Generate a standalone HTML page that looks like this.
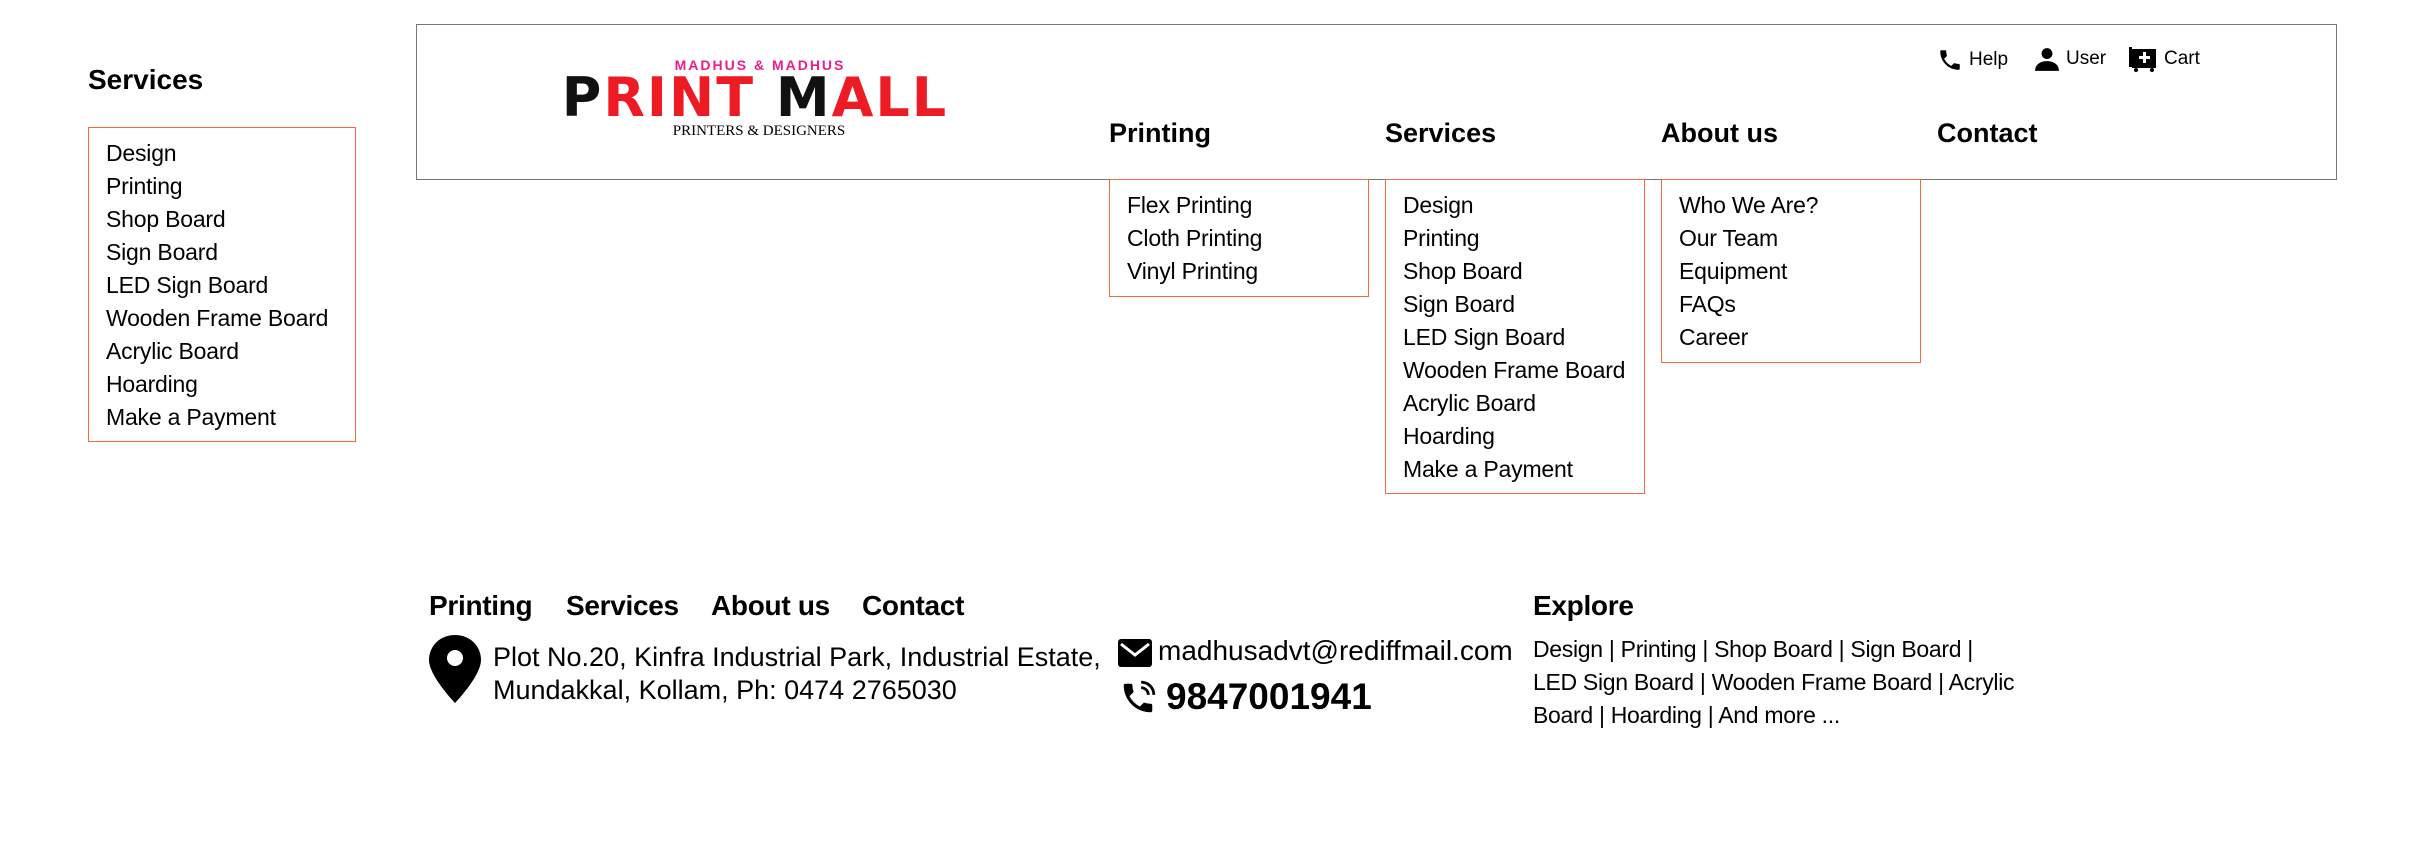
<!DOCTYPE html>
<html><head><meta charset="utf-8"><style>
*{margin:0;padding:0;box-sizing:border-box}
body{width:2418px;height:853px;background:#fff;position:relative;font-family:"Liberation Sans",Arial,sans-serif;color:#000;overflow:hidden}
.abs{position:absolute}
.box{position:absolute;border:1.5px solid #f26a3d;padding-top:9px;padding-left:17px}
.box div{font-size:23px;line-height:33px;white-space:nowrap;letter-spacing:-0.2px}
.nav{position:absolute;top:116px;font-size:27px;font-weight:bold;line-height:34px}
.top{position:absolute;top:46px;font-size:19px;line-height:24px;display:flex;align-items:center;gap:6px}
.fn{position:absolute;top:589px;font-size:28px;font-weight:bold;line-height:34px;letter-spacing:-0.3px}
</style></head><body>

<div class="abs" style="left:88px;top:63px;font-size:28px;font-weight:bold;line-height:34px">Services</div>
<div class="box" style="left:88px;top:127px;width:268px;height:315px">
<div>Design</div><div>Printing</div><div>Shop Board</div><div>Sign Board</div><div>LED Sign Board</div><div>Wooden Frame Board</div><div>Acrylic Board</div><div>Hoarding</div><div>Make a Payment</div>
</div>

<div class="abs" style="left:416px;top:24px;width:1921px;height:156px;border:1.5px solid #777"></div>

<!-- logo -->
<div class="abs" style="left:520px;top:56px;width:470px;height:90px;text-align:center;white-space:nowrap">
<div style="font-size:14px;color:#ec1c8c;font-weight:bold;letter-spacing:2px;line-height:18px;padding-left:10px">MADHUS &amp; MADHUS</div>
<div style="font-size:54px;font-weight:bold;line-height:48px;letter-spacing:2px;color:#ed1c24;font-family:'DejaVu Sans','Liberation Sans',sans-serif"><span style="color:#111">P</span>RINT <span style="color:#111">M</span>ALL</div>
<div style="font-family:'Liberation Serif',serif;font-size:15px;line-height:18px;padding-left:8px">PRINTERS &amp; DESIGNERS</div>
</div>

<div class="top" style="left:1937px"><svg width="26" height="28" viewBox="0 0 24 24"><path d="M6.6 10.8c1.4 2.8 3.8 5.1 6.6 6.6l2.2-2.2c.3-.3.7-.4 1-.2 1.1.4 2.3.6 3.6.6.6 0 1 .4 1 1V20c0 .6-.4 1-1 1C10.6 21 3 13.4 3 4c0-.6.4-1 1-1h3.5c.6 0 1 .4 1 1 0 1.3.2 2.5.6 3.6.1.3 0 .7-.2 1z"/></svg>Help</div>
<div class="top" style="left:2034px"><svg width="26" height="26" viewBox="0 0 24 24"><circle cx="12" cy="7" r="5"/><path d="M1 23c0-6 5-9 11-9s11 3 11 9z"/></svg>User</div>
<div class="top" style="left:2128px"><svg width="30" height="26" viewBox="0 0 30 26"><rect x="1" y="1" width="3" height="20"/><rect x="4" y="3" width="24" height="16"/><rect x="4" y="19" width="24" height="3"/><circle cx="8" cy="24" r="2"/><circle cx="24" cy="24" r="2"/><path d="M15 6h3v4h4v3h-4v4h-3v-4h-4v-3h4z" fill="#fff"/></svg>Cart</div>

<div class="nav" style="left:1109px">Printing</div>
<div class="nav" style="left:1385px">Services</div>
<div class="nav" style="left:1661px">About us</div>
<div class="nav" style="left:1937px">Contact</div>

<div class="box" style="left:1109px;top:179px;width:260px;height:118px">
<div>Flex Printing</div><div>Cloth Printing</div><div>Vinyl Printing</div></div>
<div class="box" style="left:1385px;top:179px;width:260px;height:315px">
<div>Design</div><div>Printing</div><div>Shop Board</div><div>Sign Board</div><div>LED Sign Board</div><div>Wooden Frame Board</div><div>Acrylic Board</div><div>Hoarding</div><div>Make a Payment</div></div>
<div class="box" style="left:1661px;top:179px;width:260px;height:184px">
<div>Who We Are?</div><div>Our Team</div><div>Equipment</div><div>FAQs</div><div>Career</div></div>

<div class="fn" style="left:429px">Printing</div>
<div class="fn" style="left:566px">Services</div>
<div class="fn" style="left:711px">About us</div>
<div class="fn" style="left:862px">Contact</div>

<svg class="abs" style="left:429px;top:635px" width="52" height="68" viewBox="0 0 52 68"><path d="M26 0C11 0 0 11 0 25c0 16 26 43 26 43s26-27 26-43C52 11 41 0 26 0z"/><circle cx="26" cy="23" r="8" fill="#fff"/></svg>
<div class="abs" style="left:493px;top:641px;font-size:27px;line-height:33px">Plot No.20, Kinfra Industrial Park, Industrial Estate,<br>Mundakkal, Kollam, Ph: 0474 2765030</div>

<svg class="abs" style="left:1118px;top:639px" width="34" height="28" viewBox="0 0 34 28"><rect x="0" y="0" width="34" height="28" rx="3"/><path d="M3 5l14 11L31 5" stroke="#fff" stroke-width="3" fill="none"/></svg>
<div class="abs" style="left:1158px;top:634px;font-size:28px;line-height:34px">madhusadvt@rediffmail.com</div>
<svg class="abs" style="left:1119px;top:678px" width="38" height="40" viewBox="0 0 24 24"><path d="M6.6 10.8c1.4 2.8 3.8 5.1 6.6 6.6l2.2-2.2c.3-.3.7-.4 1-.2 1.1.4 2.3.6 3.6.6.6 0 1 .4 1 1V20c0 .6-.4 1-1 1C10.6 21 3 13.4 3 4c0-.6.4-1 1-1h3.5c.6 0 1 .4 1 1 0 1.3.2 2.5.6 3.6.1.3 0 .7-.2 1z"/><path d="M14 2a8 8 0 0 1 8 8M14 5.5a4.5 4.5 0 0 1 4.5 4.5" stroke="#000" stroke-width="1.8" fill="none"/></svg>
<div class="abs" style="left:1166px;top:677px;font-size:37px;font-weight:bold;line-height:40px">9847001941</div>

<div class="fn" style="left:1533px">Explore</div>
<div class="abs" style="left:1533px;top:633px;white-space:nowrap;font-size:23px;line-height:33px;letter-spacing:-0.3px">Design | Printing | Shop Board | Sign Board |<br>LED Sign Board | Wooden Frame Board | Acrylic<br>Board | Hoarding | And more ...</div>

</body></html>
